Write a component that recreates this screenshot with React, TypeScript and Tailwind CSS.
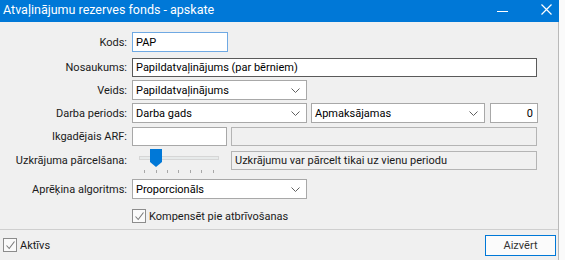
import React from 'react';

// combo chevron
const Chevron = () => (
    <svg width="9" height="5" viewBox="0 0 9 5" className="shrink-0">
        <path d="M0.5 0.5 L4.5 4.5 L8.5 0.5" fill="none" stroke="#606060" strokeWidth="1" />
    </svg>
);

const Check = () => (
    <svg width="11" height="11" viewBox="0 0 11 11">
        <path d="M1.5 5.5 L4.2 8.5 L9.5 1.5" fill="none" stroke="#7a7a7a" strokeWidth="1.1" />
    </svg>
);

const Label = ({ children }: { children: React.ReactNode }) => (
    <div className="w-[132px] shrink-0 pr-[5px] text-right text-[#1a1a1a] whitespace-nowrap">{children}</div>
);

const TextBox = ({ value, className = '' }: { value?: string; className?: string }) => (
    <div className={`h-full flex items-center bg-white border border-[#a8a8a8] px-[3px] text-black whitespace-nowrap ${className}`}>
        {value}
    </div>
);

const Combo = ({ value, className = '' }: { value: string; className?: string }) => (
    <div className={`h-full flex items-center justify-between bg-white border border-[#a8a8a8] pl-[3px] pr-[6px] text-black whitespace-nowrap ${className}`}>
        <span>{value}</span>
        <Chevron />
    </div>
);

const CheckBox = () => (
    <div className="w-[14px] h-[14px] flex items-center justify-center border border-[#8c8c8c] bg-[#fafafa]">
        <Check />
    </div>
);

const Slider = () => {
    const ticks = [144, 156, 167, 178, 190, 201, 213];
    return (
        <div className="relative w-[94px] h-[28px] -mt-[2px]">
            {/* track */}
            <div className="absolute left-[7px] top-[7px] w-[80px] h-[4px] bg-[#e7eaea] border border-[#d6d6d6]" />
            {/* thumb */}
            <svg className="absolute left-[18px] top-0" width="12" height="18" viewBox="0 0 12 18">
                <path d="M0 0 H12 V13 L6 18 L0 13 Z" fill="#0078d7" />
            </svg>
            {ticks.map((x) => (
                <div key={x} className="absolute top-[21px] w-[1px] h-[3px] bg-[#a8a8a8]" style={{ left: x - 132 }} />
            ))}
        </div>
    );
};

export default function App() {
    return (
        <div className="w-[565px] h-[260px] flex bg-white overflow-hidden font-['Roboto',sans-serif] text-[11px] leading-none">
            <div className="w-[559px] shrink-0 flex flex-col bg-[#f0f0f0] border-r border-[#b9b9b9]">
                {/* title bar */}
                <div className="h-[22px] shrink-0 flex items-center bg-[#0078d7] text-white text-[12.5px] pl-[3px] w-[562px]">
                    <span className="flex-1 -mt-[2px] whitespace-nowrap">Atvaļinājumu rezerves fonds - apskate</span>
                    <div className="w-[11px] h-[1px] bg-white mr-[33px]" />
                    <svg width="11" height="11" viewBox="0 0 11 11" className="mr-[10px] -mt-[3px]">
                        <path d="M0.5 0.5 L10.5 10.5 M10.5 0.5 L0.5 10.5" stroke="white" strokeWidth="1.2" />
                    </svg>
                </div>

                <div className="flex flex-col">
                    <div className="flex items-center h-[20px] mt-[10px]">
                        <Label>Kods:</Label>
                        <TextBox value="PAP" className="w-[96px] !border-[#6fa9e3]" />
                    </div>
                    <div className="flex items-center h-[19px] mt-[6px]">
                        <Label>Nosaukums:</Label>
                        <TextBox value="Papildatvaļinājums (par bērniem)" className="w-[405px] !border-[#5a5a5a]" />
                    </div>
                    <div className="flex items-center h-[20px] mt-[3px]">
                        <Label>Veids:</Label>
                        <Combo value="Papildatvaļinājums" className="w-[175px]" />
                    </div>
                    <div className="flex items-center h-[20px] mt-[3px] gap-[4px]">
                        <Label>Darba periods:</Label>
                        <Combo value="Darba gads" className="w-[175px] -ml-[4px]" />
                        <Combo value="Apmaksājamas" className="w-[174px]" />
                        <div className="h-full w-[48px] ml-[1px] flex items-center justify-end bg-white border border-[#a8a8a8] pr-[4px] text-black">0</div>
                    </div>
                    <div className="flex items-center h-[19px] mt-[4px]">
                        <Label>Ikgadējais ARF:</Label>
                        <TextBox className="w-[95px]" />
                        <div className="h-full w-[306px] ml-[4px] bg-[#f0f0f0] border border-[#b4b4b4]" />
                    </div>
                    <div className="flex items-center h-[19px] mt-[5px]">
                        <Label>Uzkrājuma pārcelšana:</Label>
                        <div className="w-[99px] h-full flex items-start">
                            <Slider />
                        </div>
                        <div className="h-full w-[306px] flex items-center bg-[#f0f0f0] border border-[#b4b4b4] px-[3px] text-[#1a1a1a] whitespace-nowrap">
                            Uzkrājumu var pārcelt tikai uz vienu periodu
                        </div>
                    </div>
                    <div className="flex items-center h-[20px] mt-[9px]">
                        <Label>Aprēķina algoritms:</Label>
                        <Combo value="Proporcionāls" className="w-[175px]" />
                    </div>
                    <div className="flex items-center h-[14px] mt-[10px] pl-[132px] gap-[3px]">
                        <CheckBox />
                        <span className="text-[#1a1a1a] whitespace-nowrap">Kompensēt pie atbrīvošanas</span>
                    </div>
                </div>

                {/* footer */}
                <div className="mt-[6px] border-t border-[#cfcfcf] flex items-start justify-between">
                    <div className="flex items-center gap-[3px] pl-[3px] mt-[8px]">
                        <CheckBox />
                        <span className="text-[#1a1a1a]">Aktīvs</span>
                    </div>
                    <button className="mt-[5px] mr-[2px] w-[71px] h-[21px] border border-[#0078d7] bg-[#fbfbfb] text-[#333] flex items-center justify-center">
                        Aizvērt
                    </button>
                </div>
            </div>
            <div className="flex-1 bg-[#fafafa]" />
        </div>
    );
}
